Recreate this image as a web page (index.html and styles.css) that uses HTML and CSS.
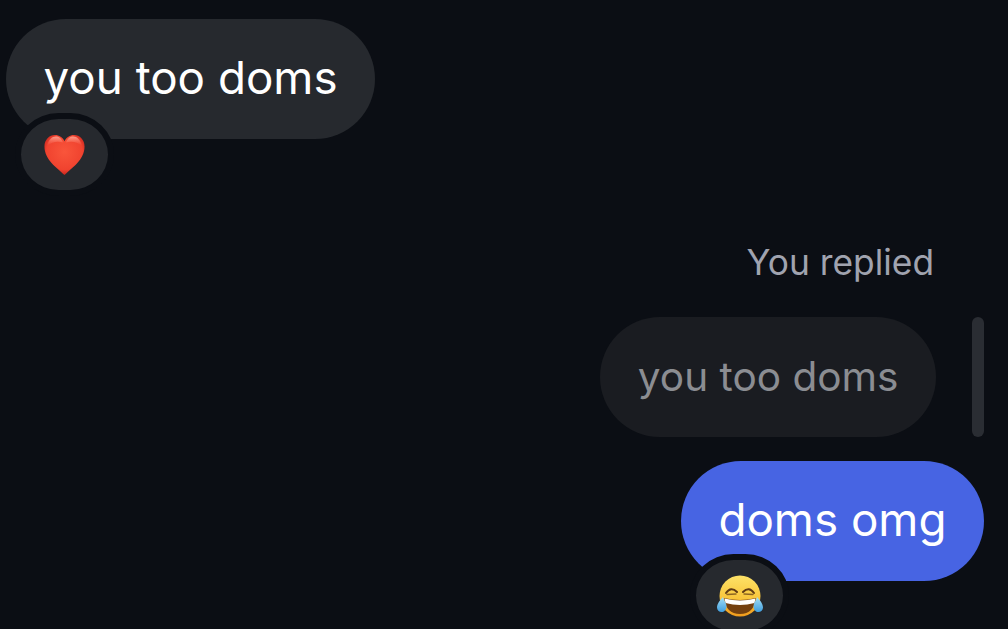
FILE: index.html
```html
<!DOCTYPE html>
<html lang="en">
<head>
  <meta charset="UTF-8">
  <meta name="viewport" content="width=device-width, initial-scale=1.0">
  <title>Messages</title>
  <link rel="stylesheet" href="styles.css">
</head>
<body>
  <div class="thread">
    <div class="message incoming">
      <div class="bubble">you too doms</div>
      <div class="reaction">
        <svg class="emoji" viewBox="0 0 44 44" width="43" height="42" aria-hidden="true">
          <defs>
            <radialGradient id="heartFill" cx="50%" cy="42%" r="62%">
              <stop offset="0" stop-color="#f9553b"/>
              <stop offset="0.72" stop-color="#f0432f"/>
              <stop offset="1" stop-color="#b91a18"/>
            </radialGradient>
            <linearGradient id="heartGloss" x1="0" y1="0" x2="0" y2="1">
              <stop offset="0" stop-color="#ffb5a6" stop-opacity="0.8"/>
              <stop offset="1" stop-color="#ff8a75" stop-opacity="0"/>
            </linearGradient>
          </defs>
          <path d="M22 43C14 35 1 27 1 13C1 6 6 1 12 1C16.500 1 20 3.500 22 7.500C24 3.500 27.500 1 32 1C38 1 43 6 43 13C43 27 30 35 22 43Z" fill="url(#heartFill)"/>
          <path d="M4 12C5 6 9 2.500 13 2.500C16 2.500 19 4.500 20.500 9C15 7 9 8 4 12Z" fill="url(#heartGloss)"/>
          <path d="M40 12C39 6 35 2.500 31 2.500C28 2.500 25 4.500 23.500 9C29 7 35 8 40 12Z" fill="url(#heartGloss)"/>
        </svg>
      </div>
    </div>

    <div class="reply-label">You replied</div>
    <div class="reply-row">
      <div class="bubble quoted">you too doms</div>
      <div class="reply-bar"></div>
    </div>

    <div class="message outgoing">
      <div class="bubble blue">doms omg</div>
      <div class="reaction">
        <svg class="emoji" viewBox="0 0 46 42" width="46" height="42" aria-hidden="true">
          <defs>
            <linearGradient id="faceFill" x1="0" y1="0" x2="0" y2="1">
              <stop offset="0" stop-color="#fde268"/>
              <stop offset="0.55" stop-color="#f9c63c"/>
              <stop offset="1" stop-color="#f09a1c"/>
            </linearGradient>
            <linearGradient id="tearFill" x1="0" y1="0" x2="0" y2="1">
              <stop offset="0" stop-color="#a5e0f7"/>
              <stop offset="1" stop-color="#3f9ede"/>
            </linearGradient>
          </defs>
          <circle cx="23" cy="21" r="20.500" fill="url(#faceFill)"/>
          <path d="M9 18Q14 11 20 17M26 17Q32 11 37 18" fill="none" stroke="#5f3a14" stroke-width="2" stroke-linecap="round"/>
          <path d="M10 19.500L19 19M27 19L36 19.500" fill="none" stroke="#5f3a14" stroke-width="1.400" stroke-linecap="round" opacity="0.7"/>
          <path d="M7 23Q23 27 39 23Q37 39 23 39Q9 39 7 23Z" fill="#74400f"/>
          <path d="M7.500 23.500Q23 27.500 38.500 23.500L37.500 28Q23 32 8.500 28Z" fill="#fff"/>
          <path d="M6 22C7 26 9.500 28 9.500 31.500C9.500 35 7 37 4.700 37C2 37 0 35 0 32.500C0 29 3 25 6 22Z" fill="url(#tearFill)"/>
          <path d="M40 22C39 26 36.500 28 36.500 31.500C36.500 35 39 37 41.300 37C44 37 46 35 46 32.500C46 29 43 25 40 22Z" fill="url(#tearFill)"/>
        </svg>
      </div>
    </div>
  </div>
</body>
</html>
```

FILE: styles.css
```css
body {
  margin: 0;
  height: 629px;
  overflow: hidden;
  background-color: #0b0e14;
  font-family: Inter, "Liberation Sans", sans-serif;
  font-weight: 375;
  color: #fff;
}

.thread {
  display: flex;
  flex-direction: column;
  padding: 19px 24px 0 6px;
}

.message {
  position: relative;
  display: flex;
}

.outgoing {
  justify-content: flex-end;
  margin-top: 24px;
}

.bubble {
  height: 120px;
  line-height: 118px;
  padding: 0 37.500px;
  border-radius: 60px;
  box-sizing: border-box;
  background-color: #26292e;
  font-size: 45.750px;
  white-space: nowrap;
}

.blue {
  background-color: #4764e3;
}

.quoted {
  background-color: #1a1c21;
  color: #8b8d92;
  font-size: 40.550px;
  line-height: 120px;
}

.reply-label {
  margin-top: 104px;
  margin-right: 50px;
  text-align: right;
  font-size: 35.300px;
  line-height: 40px;
  color: #a0a3af;
}

.reply-row {
  display: flex;
  justify-content: flex-end;
  gap: 36px;
  margin-top: 34px;
}

.reply-bar {
  width: 12px;
  border-radius: 6px;
  background-color: #2a2d33;
}

/* sits on the bubble's bottom edge, border fakes the cut-out */
.reaction {
  position: absolute;
  top: 94px;
  left: 9px;
  width: 87px;
  height: 71px;
  display: flex;
  align-items: center;
  justify-content: center;
  border: 6px solid #0b0e14;
  border-radius: 44% / 50%;
  background-color: #26292e;
}

.outgoing .reaction {
  top: 93px;
  left: auto;
  right: 195px;
}
```
